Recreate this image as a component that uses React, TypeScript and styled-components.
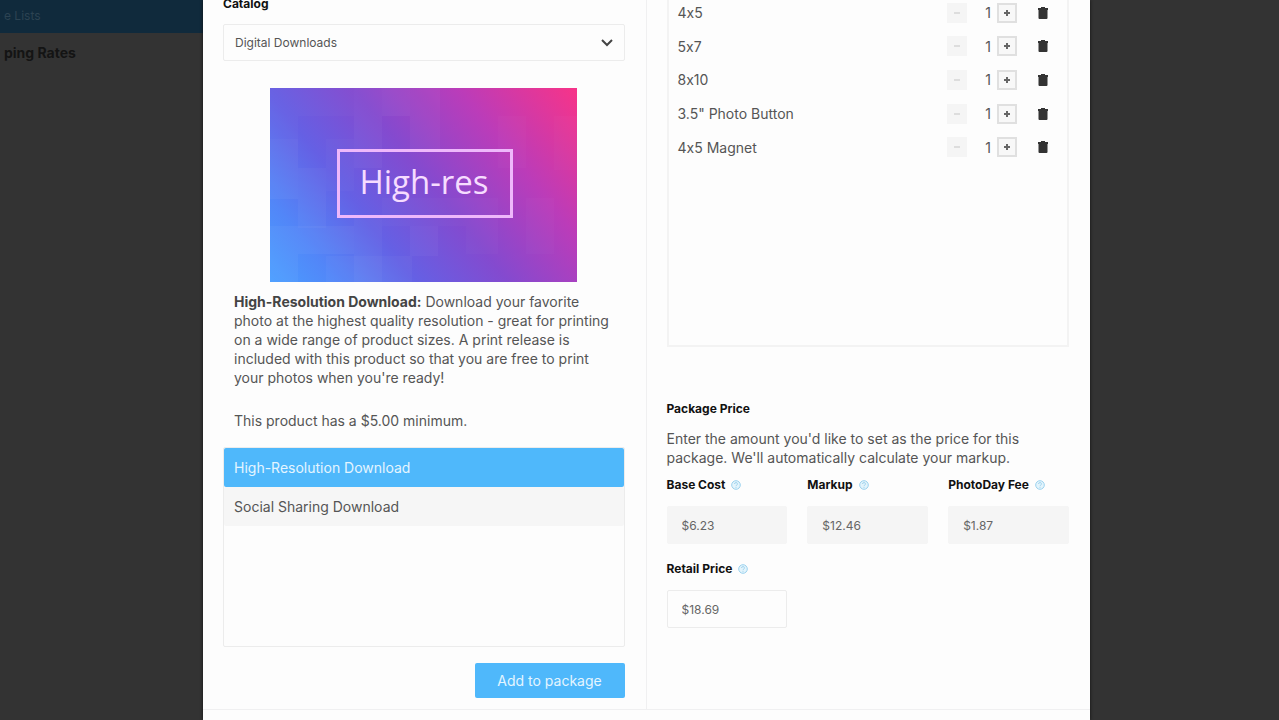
import React from "react";
import styled, { createGlobalStyle } from "styled-components";

const GlobalStyle = createGlobalStyle`
  * { box-sizing: border-box; }
  html, body { margin: 0; padding: 0; }
  body {
    background: #333;
    color: #555;
    font-family: Inter, "Liberation Sans", Arial, sans-serif;
    font-feature-settings: "calt" 0;
    font-size: 14px;
    line-height: 19px;
    overflow: hidden;
  }
  button, input, select { font-family: inherit; margin: 0; }
  p, ul { margin: 0; padding: 0; }
`;

const Page = styled.div`
  position: relative;
  min-height: 100vh;
`;

const SideNav = styled.nav`
  width: 203px;
  display: flex;
  flex-direction: column;
`;

const SideLink = styled.a<{ $active?: boolean }>`
  display: block;
  height: ${(p) => (p.$active ? "33px" : "41px")};
  padding: ${(p) => (p.$active ? "6px" : "10px")} 4px 0;
  background: ${(p) => (p.$active ? "#102a3c" : "#333")};
  color: ${(p) => (p.$active ? "#2c4352" : "#141414")};
  font-size: ${(p) => (p.$active ? "12px" : "14px")};
  font-weight: ${(p) => (p.$active ? 400 : 700)};
  text-decoration: none;
  white-space: nowrap;
`;

const Overlay = styled.div`
  position: absolute;
  inset: 0;
  padding: 0 189px 0 203px;
`;

const Modal = styled.section`
  min-height: 100%;
  background: #fdfdfd;
  box-shadow: 0 0 3px #111;
`;

const Columns = styled.div`
  display: grid;
  grid-template-columns: 1fr 1fr;
  border-bottom: 1px solid #f0f0f1;
`;

const CatalogColumn = styled.div`
  display: flex;
  flex-direction: column;
  padding: 0 21px 11px 20px;
  border-right: 1px solid #f0f0f1;
`;

const PackageColumn = styled.div`
  display: flex;
  flex-direction: column;
  padding: 0 21px 0 20px;
`;

const Label = styled.label`
  display: flex;
  align-items: center;
  gap: 6px;
  height: 18px;
  color: #111;
  font-size: 12px;
  line-height: 18px;
  font-weight: 700;
  white-space: nowrap;
`;

const CatalogLabel = styled(Label)`
  margin-top: -5px;
`;

const SelectWrap = styled.div`
  position: relative;
  margin-top: 11px;
  svg {
    position: absolute;
    right: 12px;
    top: 12px;
    pointer-events: none;
  }
`;

const Select = styled.select`
  display: block;
  appearance: none;
  width: 100%;
  height: 37px;
  padding: 0 32px 0 11px;
  border: 1px solid #ececec;
  border-radius: 2px;
  background: #fdfdfd;
  color: #555;
  font-size: 12px;
`;

const Preview = styled.svg`
  display: block;
  width: 307px;
  height: 194px;
  margin: 27px auto 10px;
`;

const Description = styled.p`
  padding: 0 11px;
  & + & { margin-top: 24px; }
  strong { color: #444; }
`;

const ProductList = styled.ul`
  list-style: none;
  height: 200px;
  margin-top: 17px;
  border: 1px solid #ececec;
  border-radius: 2px;
`;

const ProductButton = styled.button<{ $selected?: boolean }>`
  display: block;
  width: 100%;
  height: 39px;
  padding: 0 10px;
  border: 0;
  border-radius: 2px;
  background: ${(p) => (p.$selected ? "#4fb8fb" : "#f6f6f6")};
  color: ${(p) => (p.$selected ? "#e4f5ff" : "#555")};
  font-size: 14px;
  text-align: left;
`;

const AddButton = styled.button`
  align-self: flex-end;
  width: 150px;
  height: 35px;
  margin-top: 16px;
  border: 0;
  border-radius: 2px;
  background: #4fb8fb;
  color: #e4f5ff;
  font-size: 14px;
`;

const PackageBox = styled.div`
  height: 351px;
  margin-top: -4px;
  border: 2px solid #f3f3f3;
  border-top: 0;
`;

const Items = styled.ul`
  display: grid;
  grid-template-rows: repeat(5, 1fr);
  height: 168px;
  list-style: none;
`;

const Item = styled.li`
  display: flex;
  align-items: center;
  padding: 0 18px 0 9px;
`;

const ItemName = styled.span`
  flex: 1;
`;

const Quantity = styled.span`
  width: 30px;
  padding-right: 6px;
  text-align: right;
`;

const StepButton = styled.button`
  display: grid;
  place-items: center;
  width: 20px;
  height: 20px;
  padding: 0;
  border: 2px solid #e0e0e0;
  background: #f8f8f8;
  color: #666;
  &:disabled {
    border-color: #f5f5f5;
    background: #f5f5f5;
    color: #ddd;
  }
`;

const TrashButton = styled.button`
  display: grid;
  place-items: center;
  width: 12px;
  height: 16px;
  margin-left: 20px;
  padding: 0;
  border: 0;
  background: none;
  color: #333;
`;

const PriceHeading = styled.h2`
  margin: 53px 0 11px;
  color: #111;
  font-size: 12px;
  line-height: 18px;
  font-weight: 700;
`;

const PriceGrid = styled.div`
  display: grid;
  grid-template-columns: repeat(3, 1fr);
  gap: 15px 20px;
  margin-top: 9px;
`;

const PriceInput = styled.input`
  display: block;
  width: 100%;
  height: 38px;
  margin-top: 12px;
  margin-bottom: 1px;
  padding: 0 14px;
  border: 1px solid #ececec;
  border-radius: 2px;
  background: #fdfdfd;
  color: #666;
  font-size: 12px;
  &:read-only {
    border-color: #f5f5f5;
    background: #f5f5f5;
  }
`;

const Chevron = () => (
  <svg width="12" height="12" viewBox="0 0 12 12" fill="none" stroke="#444" strokeWidth="2" aria-hidden="true">
    <path d="M1 4l5 5 5-5" />
  </svg>
);

const Trash = () => (
  <svg width="10" height="14" viewBox="0 0 10 14" fill="currentColor" aria-hidden="true">
    <path d="M3 1h4v1h3v2H0V2h3zM.5 4h9v8a1 1 0 0 1-1 1h-7a1 1 0 0 1-1-1z" />
  </svg>
);

const Help = () => (
  <svg width="10" height="10" viewBox="0 0 10 10" fill="none" stroke="#9bd2ee" aria-hidden="true">
    <circle cx="5" cy="5" r="4.3" fill="#e3f4fc" />
    <path d="M3.6 4a1.4 1.4 0 1 1 2 1.2c-.5.3-.6.5-.6 1M5 7v.8" />
  </svg>
);

const Step = ({ plus }: { plus?: boolean }) => (
  <svg width="8" height="8" viewBox="0 0 8 8" stroke="currentColor" strokeWidth="2" aria-hidden="true">
    <path d={plus ? "M1 4h6M4 1v6" : "M1 4h6"} />
  </svg>
);

const tiles = [
  [0, 0, 28, 51, 0.02], [28, 0, 56, 28, 0.02], [84, 0, 28, 80, 0.03], [112, 0, 28, 28, 0.04],
  [140, 0, 30, 62, 0.03], [0, 51, 28, 60, 0.04], [28, 80, 28, 60, 0.03], [56, 51, 28, 52, 0.02],
  [0, 138, 28, 56, 0.04], [28, 138, 56, 28, 0.04], [84, 130, 28, 64, 0.03], [56, 168, 86, 26, 0.03],
  [140, 138, 28, 30, 0.03], [168, 110, 60, 28, 0.02], [228, 28, 28, 52, 0.02], [284, 28, 23, 54, 0.02],
  [256, 110, 28, 56, 0.02], [196, 138, 32, 28, 0.02], [112, 110, 56, 28, 0.02],
];

const HighResPreview = () => (
  <Preview viewBox="0 0 307 194" role="img" aria-label="High-res">
    <defs>
      <linearGradient id="highres" gradientUnits="userSpaceOnUse" x1="10" y1="202" x2="287" y2="-18">
        <stop offset="0" stopColor="#4a9dff" />
        <stop offset="0.14" stopColor="#5286f8" />
        <stop offset="0.32" stopColor="#6560e4" />
        <stop offset="0.52" stopColor="#844acf" />
        <stop offset="0.75" stopColor="#bb3cb9" />
        <stop offset="1" stopColor="#f5348a" />
      </linearGradient>
    </defs>
    <rect width="307" height="194" fill="url(#highres)" />
    {tiles.map(([x, y, w, h, o], i) => (
      <rect key={i} x={x} y={y} width={w} height={h} fill="#fff" opacity={o} />
    ))}
    <rect x="68.5" y="62.5" width="173" height="66" fill="none" stroke="#eeb8fb" strokeWidth="3" />
    <text x="154" y="106" textAnchor="middle" fill="#f6dcff" fontFamily="Open Sans, sans-serif" fontSize="33">
      High-res
    </text>
  </Preview>
);

const items = ["4x5", "5x7", "8x10", '3.5" Photo Button', "4x5 Magnet"];

const prices = [
  { id: "base", label: "Base Cost", value: "$6.23", locked: true },
  { id: "markup", label: "Markup", value: "$12.46", locked: true },
  { id: "fee", label: "PhotoDay Fee", value: "$1.87", locked: true },
  { id: "retail", label: "Retail Price", value: "$18.69", locked: false },
];

export default function App() {
  return (
    <Page>
      <GlobalStyle />
      <SideNav>
        <SideLink href="#lists" $active>e Lists</SideLink>
        <SideLink href="#shipping">ping Rates</SideLink>
      </SideNav>
      <Overlay>
        <Modal role="dialog" aria-label="Package">
          <Columns>
            <CatalogColumn>
              <CatalogLabel htmlFor="catalog">Catalog</CatalogLabel>
              <SelectWrap>
                <Select id="catalog" defaultValue="digital">
                  <option value="digital">Digital Downloads</option>
                </Select>
                <Chevron />
              </SelectWrap>
              <HighResPreview />
              <Description>
                <strong>High-Resolution Download:</strong> Download your favorite photo at the highest quality
                resolution - great for printing on a wide range of product sizes. A print release is included with
                this product so that you are free to print your photos when you're ready!
              </Description>
              <Description>This product has a $5.00 minimum.</Description>
              <ProductList>
                <li><ProductButton type="button" $selected>High-Resolution Download</ProductButton></li>
                <li><ProductButton type="button">Social Sharing Download</ProductButton></li>
              </ProductList>
              <AddButton type="button">Add to package</AddButton>
            </CatalogColumn>
            <PackageColumn>
              <PackageBox>
                <Items>
                  {items.map((name) => (
                    <Item key={name}>
                      <ItemName>{name}</ItemName>
                      <StepButton type="button" disabled aria-label={`Fewer ${name}`}><Step /></StepButton>
                      <Quantity>1</Quantity>
                      <StepButton type="button" aria-label={`More ${name}`}><Step plus /></StepButton>
                      <TrashButton type="button" aria-label={`Remove ${name}`}><Trash /></TrashButton>
                    </Item>
                  ))}
                </Items>
              </PackageBox>
              <PriceHeading>Package Price</PriceHeading>
              <p>
                Enter the amount you'd like to set as the price for this package. We'll automatically calculate your
                markup.
              </p>
              <PriceGrid>
                {prices.map((p) => (
                  <div key={p.id}>
                    <Label htmlFor={p.id}>{p.label}<Help /></Label>
                    <PriceInput id={p.id} defaultValue={p.value} readOnly={p.locked} />
                  </div>
                ))}
              </PriceGrid>
            </PackageColumn>
          </Columns>
        </Modal>
      </Overlay>
    </Page>
  );
}
